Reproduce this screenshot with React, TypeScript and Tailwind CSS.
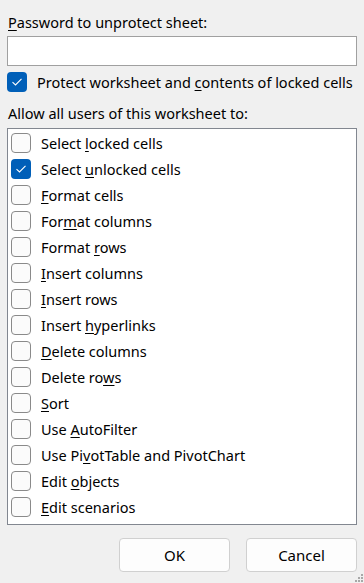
import React from 'react'

type Perm = { pre: string; key: string; post: string; checked?: boolean }

const perms: Perm[] = [
  { pre: 'Select ', key: 'l', post: 'ocked cells' },
  { pre: 'Select ', key: 'u', post: 'nlocked cells', checked: true },
  { pre: '', key: 'F', post: 'ormat cells' },
  { pre: 'For', key: 'm', post: 'at columns' },
  { pre: 'Format ', key: 'r', post: 'ows' },
  { pre: '', key: 'I', post: 'nsert columns' },
  { pre: '', key: 'I', post: 'nsert rows' },
  { pre: 'Insert ', key: 'h', post: 'yperlinks' },
  { pre: '', key: 'D', post: 'elete columns' },
  { pre: 'Delete ro', key: 'w', post: 's' },
  { pre: '', key: 'S', post: 'ort' },
  { pre: 'Use ', key: 'A', post: 'utoFilter' },
  { pre: 'Use Pi', key: 'v', post: 'otTable and PivotChart' },
  { pre: 'Edit ', key: 'o', post: 'bjects' },
  { pre: '', key: 'E', post: 'dit scenarios' },
]

function Check({ checked }: { checked?: boolean }) {
  if (checked) {
    return (
      <span className="flex h-[20px] w-[20px] shrink-0 items-center justify-center rounded-[4px] bg-[#005fb8]">
        <svg width="12" height="10" viewBox="0 0 12 10" fill="none">
          <path d="M1.5 5.2 L4.5 8 L10.5 1.8" stroke="white" strokeWidth="1.1" />
        </svg>
      </span>
    )
  }
  return <span className="h-[20px] w-[20px] shrink-0 rounded-[4px] border border-[#8a8a8a] bg-[#fbfbfb]" />
}

export default function App() {
  return (
    <div
      className="relative h-[583px] w-[364px] overflow-hidden bg-[#f0f0f0] text-[14.5px] text-black"
      style={{ fontFamily: '"Noto Sans", "Open Sans", sans-serif' }}
    >
      <div className="px-[8px] pt-[12px] leading-[20px]">
        <span className="underline underline-offset-2">P</span>assword to unprotect sheet:
      </div>
      <div className="mx-[7px] mt-[4px] h-[30px] border border-[#a0a0a0] bg-white" />
      <div className="mt-[6px] flex items-center gap-[10px] px-[7px] leading-[20px]">
        <Check checked />
        <span className="whitespace-nowrap">
          Protect worksheet and <span className="underline underline-offset-2">c</span>ontents of locked cells
        </span>
      </div>
      <div className="mt-[11px] px-[8px] leading-[20px]">Allow all users of this worksheet to:</div>
      <div className="mx-[7px] mt-[5px] h-[397px] border border-[#828790] bg-white pt-[1px]">
        {perms.map((p, i) => (
          <div key={i} className="flex h-[26px] items-center gap-[10px] pl-[3px] leading-[20px]">
            <Check checked={p.checked} />
            <span className="whitespace-nowrap">
              {p.pre}
              <span className="underline underline-offset-2">{p.key}</span>
              {p.post}
            </span>
          </div>
        ))}
      </div>
      <div className="mt-[13px] flex justify-end gap-[16px] pr-[7px]">
        <button className="h-[34px] w-[111px] rounded-[4px] border border-[#d0d0d0] bg-[#fdfdfd] text-[15px]">
          OK
        </button>
        <button className="h-[34px] w-[111px] rounded-[4px] border border-[#d0d0d0] bg-[#fdfdfd] text-[15px]">
          Cancel
        </button>
      </div>
      <svg className="absolute bottom-0 right-0" width="10" height="10" viewBox="0 0 10 10">
        <rect x="7" y="1" width="2" height="2" fill="#a8a8a8" />
        <rect x="4" y="4" width="2" height="2" fill="#a8a8a8" />
        <rect x="7" y="4" width="2" height="2" fill="#a8a8a8" />
        <rect x="1" y="7" width="2" height="2" fill="#a8a8a8" />
        <rect x="4" y="7" width="2" height="2" fill="#a8a8a8" />
        <rect x="7" y="7" width="2" height="2" fill="#a8a8a8" />
      </svg>
    </div>
  )
}
